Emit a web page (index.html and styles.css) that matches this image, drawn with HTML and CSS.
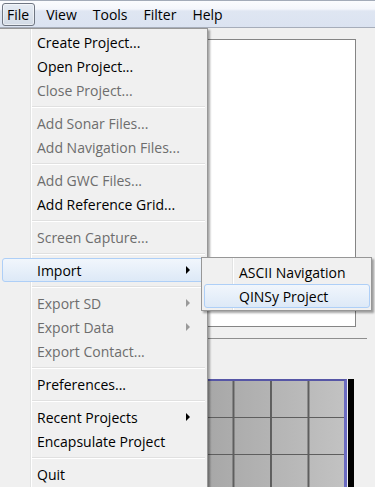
FILE: index.html
```html
<!DOCTYPE html>
<html lang="en">
<head>
  <meta charset="UTF-8">
  <title>File menu</title>
  <link rel="stylesheet" href="styles.css">
</head>
<body>
  <div class="menubar">
    <div class="bar-item open">File</div>
    <div class="bar-item">View</div>
    <div class="bar-item">Tools</div>
    <div class="bar-item">Filter</div>
    <div class="bar-item">Help</div>
  </div>

  <div class="workspace">
    <div class="top-pane">
      <div class="white-panel"></div>
    </div>
    <div class="divider"></div>
    <div class="bottom-pane">
      <div class="grid-view">
        <div class="grid"></div>
        <div class="scroll-black"></div>
      </div>
    </div>
  </div>

  <div class="menu file-menu">
    <div class="item">Create Project...</div>
    <div class="item">Open Project...</div>
    <div class="item disabled">Close Project...</div>
    <div class="sep"></div>
    <div class="item disabled">Add Sonar Files...</div>
    <div class="item disabled">Add Navigation Files...</div>
    <div class="sep"></div>
    <div class="item disabled">Add GWC Files...</div>
    <div class="item">Add Reference Grid...</div>
    <div class="sep"></div>
    <div class="item disabled">Screen Capture...</div>
    <div class="sep"></div>
    <div class="item hot sub">Import</div>
    <div class="sep"></div>
    <div class="item disabled sub">Export SD</div>
    <div class="item disabled sub">Export Data</div>
    <div class="item disabled">Export Contact...</div>
    <div class="sep"></div>
    <div class="item">Preferences...</div>
    <div class="sep"></div>
    <div class="item sub">Recent Projects</div>
    <div class="item">Encapsulate Project</div>
    <div class="sep"></div>
    <div class="item">Quit</div>
  </div>

  <div class="menu import-menu">
    <div class="item">ASCII Navigation</div>
    <div class="item hot">QINSy Project</div>
  </div>
</body>
</html>
```

FILE: styles.css
```css
body {
  margin: 0;
  width: 375px;
  height: 487px;
  overflow: hidden;
  position: relative;
  background: #f0f0f0;
  font-family: "Open Sans", "Noto Sans", Arial, sans-serif;
  font-size: 14px;
  color: #000;
}

/* menu bar */
.menubar {
  height: 28px;
  display: flex;
  align-items: center;
  padding-left: 2px;
  border-top: 1px solid #a3abb8;
  border-bottom: 1px solid #a6adba;
  background: linear-gradient(to bottom, #fbfcfe 0, #f4f6fb 8px, #dfe6f2 10px, #dbe3f1 100%);
  box-sizing: border-box;
}

.bar-item {
  height: 23px;
  line-height: 22px;
  padding: 0 7px;
  border: 1px solid transparent;
  border-radius: 3px;
  box-sizing: border-box;
}

.bar-item.open {
  border-color: #6f7682;
  background: linear-gradient(to bottom, #e5ebf3, #d3dbe6);
  box-shadow: inset 0 0 0 1px rgba(255, 255, 255, 0.5);
  padding: 0 5px 0 4px;
  margin-right: 3px;
}

/* background window content */
.workspace {
  padding-left: 160px;
}

.top-pane {
  padding: 11px 19px 0 0;
  height: 299px;
  box-sizing: border-box;
}

.white-panel {
  height: 288px;
  background: #fff;
  border: 1px solid #858585;
  box-sizing: border-box;
}

.divider {
  height: 0;
  border-top: 1px solid #8e8e8e;
  margin: 11px 8px 0 0;
}

.bottom-pane {
  padding-top: 40px;
}

.grid-view {
  display: flex;
  gap: 1px;
  height: 120px;
}

.grid {
  width: 187px;
  border-top: 2px solid #5656a6;
  border-right: 3px solid #6b6bc2;
  box-sizing: border-box;
  background-color: #b4b4b4;
  background-image:
    linear-gradient(to right, #5e5e5e 1.5px, transparent 1.5px),
    linear-gradient(to bottom, #5e5e5e 1.5px, transparent 1.5px),
    linear-gradient(to right, #9e9e9e, #c2c2c2);
  background-size: 37.5px 37px, 37.5px 37px, 100% 100%;
  background-position: 35px 36px, 35px 36px, 0 0;
}

.scroll-black {
  width: 6px;
  background: #000;
}

/* popup menus */
.menu {
  position: absolute;
  background: #f0f0f0;
  border: 1px solid #979797;
  padding: 2px 0;
  box-shadow: 2px 2px 2px rgba(0, 0, 0, 0.35);
  background-image: linear-gradient(to right, transparent 30px, #e2e3e3 30px, #e2e3e3 31px, #fff 31px, #fff 32px, transparent 32px);
}

.file-menu {
  left: -1px;
  top: 28px;
  width: 207px;
  padding-top: 1px;
}

.import-menu {
  left: 201px;
  top: 257px;
  width: 169px;
}

.item {
  height: 24px;
  display: flex;
  align-items: center;
  padding-left: 37px;
  padding-right: 14px;
  margin: 0 2px;
  border: 1px solid transparent;
  border-radius: 3px;
  box-sizing: border-box;
  white-space: nowrap;
}

.file-menu .item {
  padding-left: 34px;
  margin-left: 2px;
}

.import-menu .item {
  padding-left: 34px;
  margin: 0 1px 0 2px;
}

.item.disabled {
  color: #6d6d6d;
}

.item.hot {
  border-color: #aecff7;
  background: linear-gradient(to bottom, #f1f6fc, #dde9f7);
}

.item.sub::after {
  content: "";
  margin-left: auto;
  border-left: 4px solid #000;
  border-top: 4px solid transparent;
  border-bottom: 4px solid transparent;
}

.item.disabled.sub::after {
  border-left-color: #9a9a9a;
}

.sep {
  height: 1px;
  margin: 4px 2px 3px 32px;
  background: #e0e0e0;
  border-bottom: 1px solid #fff;
}
```
